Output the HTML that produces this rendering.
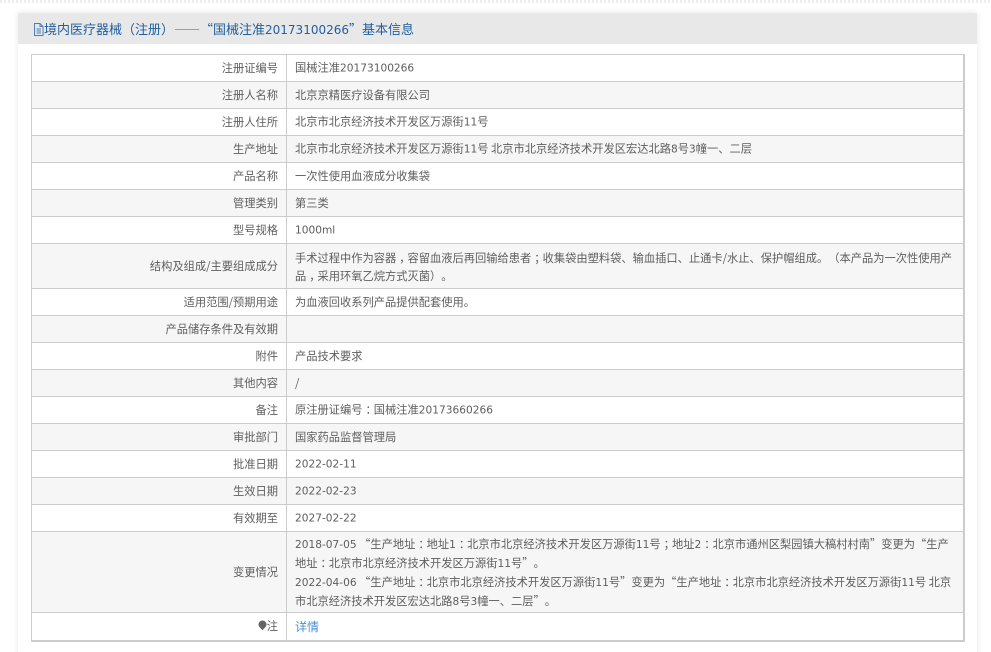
<!DOCTYPE html>
<html lang="zh"><head><meta charset="utf-8"><style>
html,body{margin:0;padding:0;background:#fff;width:991px;height:652px;overflow:hidden}
body{position:relative;font-family:"Noto Sans CJK SC","Liberation Sans",sans-serif;color:#5e5e5e;font-size:11.25px;text-spacing-trim:space-all;font-feature-settings:"palt" 0}
.top{position:absolute;left:0;top:0;width:991px;height:3px;background:repeating-linear-gradient(90deg,#eee 0 2px,#fff 2px 4px)}
.panel{position:absolute;left:18px;top:13px;width:959px;height:660px;background:#fff;box-shadow:0 0 6px rgba(0,0,0,.1)}
.hd{position:absolute;left:0;top:0;width:959px;height:31px;background:#e8e8e8}
.ttl{position:absolute;left:26px;top:0;height:31px;line-height:31px;font-size:13px;color:#215f9e;white-space:nowrap}
.ttl .n{font-size:12px}
.ico{position:absolute;left:33px;top:23px}
.tb{position:absolute;left:31px;top:54px;width:934px;height:588px;box-sizing:border-box;border:1px solid #ccc;border-right-width:2px;border-bottom-width:2px}
.r{position:absolute;left:0;width:931px;box-sizing:border-box;border-bottom:1px solid #ccc}
.r.g{background:#f6f6f6}
.l{position:absolute;left:0;top:0;bottom:0;width:255px;box-sizing:border-box;border-right:1px solid #ccc}
.l span{position:absolute;right:8px;top:50%;transform:translateY(-50%);margin-top:-.5px;line-height:18px;white-space:nowrap}
.v{position:absolute;left:263px;top:50%;transform:translateY(-50%);margin-top:-.5px;line-height:18px;white-space:nowrap}
.v.m{margin-top:.5px}
.n{font-family:"DejaVu Sans",sans-serif;font-size:10.6px}
i{font-style:normal;position:relative;left:3px}
a{color:#4a90d9;text-decoration:none;font-size:12px;position:relative;top:1px}
</style></head><body>
<div class="top"></div>
<div class="panel"><div class="hd"></div><div class="ttl">境内医疗器械（注册）——“国械注准<span class="n">20173100266</span>”基本信息</div></div>
<svg class="ico" width="11" height="13" viewBox="0 0 11 13" fill="none" stroke="#4d80b8" stroke-width="1"><path d="M1.5.5H7L10 3.5V12.5H1.5ZM7 .5V3.5H10M3.5 6H8M3.5 8H8M3.5 10H8"/></svg>
<div class="tb">
<div class="r" style="top:0;height:27px"><div class="l"><span>注册证编号</span></div><div class="v">国械注准<span class="n">20173100266</span></div></div>
<div class="r g" style="top:27px;height:27px"><div class="l"><span>注册人名称</span></div><div class="v">北京京精医疗设备有限公司</div></div>
<div class="r" style="top:54px;height:27px"><div class="l"><span>注册人住所</span></div><div class="v">北京市北京经济技术开发区万源街<span class="n">11</span>号</div></div>
<div class="r g" style="top:81px;height:27px"><div class="l"><span>生产地址</span></div><div class="v">北京市北京经济技术开发区万源街<span class="n">11</span>号 北京市北京经济技术开发区宏达北路<span class="n">8</span>号<span class="n">3</span>幢一、二层</div></div>
<div class="r" style="top:108px;height:27px"><div class="l"><span>产品名称</span></div><div class="v">一次性使用血液成分收集袋</div></div>
<div class="r g" style="top:135px;height:27px"><div class="l"><span>管理类别</span></div><div class="v">第三类</div></div>
<div class="r" style="top:162px;height:27px"><div class="l"><span>型号规格</span></div><div class="v"><span class="n">1000ml</span></div></div>
<div class="r g" style="top:189px;height:45px"><div class="l"><span>结构及组成/主要组成成分</span></div><div class="v m">手术过程中作为容器<i>，</i>容留血液后再回输给患者<i>；</i>收集袋由塑料袋、输血插口、止通卡/水止、保护帽组成。（本产品为一次性使用产<br>品<i>，</i>采用环氧乙烷方式灭菌）。</div></div>
<div class="r" style="top:234px;height:27px"><div class="l"><span>适用范围/预期用途</span></div><div class="v">为血液回收系列产品提供配套使用。</div></div>
<div class="r g" style="top:261px;height:27px"><div class="l"><span>产品储存条件及有效期</span></div></div>
<div class="r" style="top:288px;height:27px"><div class="l"><span>附件</span></div><div class="v">产品技术要求</div></div>
<div class="r g" style="top:315px;height:27px"><div class="l"><span>其他内容</span></div><div class="v">/</div></div>
<div class="r" style="top:342px;height:27px"><div class="l"><span>备注</span></div><div class="v">原注册证编号<i>：</i>国械注准<span class="n">20173660266</span></div></div>
<div class="r g" style="top:369px;height:27px"><div class="l"><span>审批部门</span></div><div class="v">国家药品监督管理局</div></div>
<div class="r" style="top:396px;height:27px"><div class="l"><span>批准日期</span></div><div class="v"><span class="n">2022-02-11</span></div></div>
<div class="r g" style="top:423px;height:27px"><div class="l"><span>生效日期</span></div><div class="v"><span class="n">2022-02-23</span></div></div>
<div class="r" style="top:450px;height:27px"><div class="l"><span>有效期至</span></div><div class="v"><span class="n">2027-02-22</span></div></div>
<div class="r g" style="top:477px;height:81px"><div class="l"><span>变更情况</span></div><div class="v m"><span class="n">2018-07-05</span> “生产地址<i>：</i>地址<span class="n">1</span><i>：</i>北京市北京经济技术开发区万源街<span class="n">11</span>号<i>；</i>地址<span class="n">2</span><i>：</i>北京市通州区梨园镇大稿村村南”变更为“生产<br>地址<i>：</i>北京市北京经济技术开发区万源街<span class="n">11</span>号”。<br><span class="n">2022-04-06</span> “生产地址<i>：</i>北京市北京经济技术开发区万源街<span class="n">11</span>号”变更为“生产地址<i>：</i>北京市北京经济技术开发区万源街<span class="n">11</span>号 北京<br>市北京经济技术开发区宏达北路<span class="n">8</span>号<span class="n">3</span>幢一、二层”。</div></div>
<div class="r" style="top:558px;height:27px;border-bottom:0"><div class="l"><span><svg width="9" height="11" viewBox="0 0 9 11" style="vertical-align:-1px"><path d="M4.5 0.5A4 4 0 0 1 8.5 4.5C8.5 7 5.5 8.5 4.5 10.5C3.5 8.5 .5 7 .5 4.5A4 4 0 0 1 4.5 .5Z" fill="#666"/></svg>注</span></div><div class="v"><a>详情</a></div></div>
</div>
</body></html>
